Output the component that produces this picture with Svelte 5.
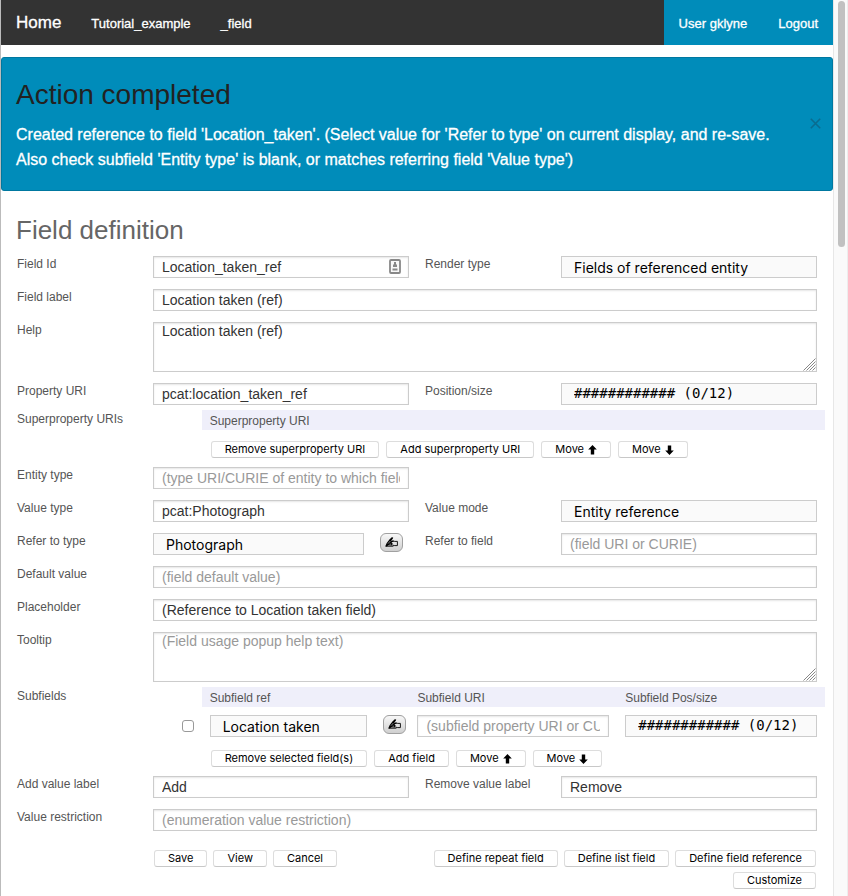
<script>
  let values = $state({
    id: 'Location_taken_ref',
    label: 'Location taken (ref)',
    help: 'Location taken (ref)',
    property: 'pcat:location_taken_ref',
    entity: '',
    valueType: 'pcat:Photograph',
    refField: '',
    fallback: '',
    placeholder: '(Reference to Location taken field)',
    tooltip: '',
    subUri: '',
    add: 'Add',
    remove: 'Remove',
    restriction: ''
  });
  let showAlert = $state(true);
  let picked = $state(false);
</script>

{#snippet text(id, label, key, hint = '', wide = false)}
  <label for={id}>{label}</label>
  <div class="cell" class:wide>
    <input {id} class="box" type="text" placeholder={hint} bind:value={values[key]} />
  </div>
{/snippet}

{#snippet area(id, label, key, hint = '')}
  <label for={id}>{label}</label>
  <div class="cell wide area">
    <textarea {id} class="box" placeholder={hint} bind:value={values[key]}></textarea>
    <svg class="grip" width="13" height="13" viewBox="0 0 13 13" aria-hidden="true">
      <path d="M0.5 12.5L12.5 0.5M3.5 12.5L12.5 3.5M6.5 12.5L12.5 6.5M9.5 12.5L12.5 9.5" />
    </svg>
  </div>
{/snippet}

{#snippet choice(id, label, option, mono = false)}
  <label for={id}>{label}</label>
  <div class="cell">
    <select {id} class="box" class:mono><option>{option}</option></select>
  </div>
{/snippet}

{#snippet editButton(name)}
  <button type="button" class="edit" aria-label={name}>
    <svg width="13" height="10" viewBox="0 0 13 10" aria-hidden="true">
      <path d="M0.2 9.4L1.6 6.2 4.4 2.6 6.8 0.2 8.2 0.4 7.8 1.8 6 3.8 8.4 3.6 8.8 4.6 6.4 5.6 7.6 6.2 7.2 8.4 3.6 8.2 1.6 9.4Z" />
      <path class="line" d="M7.6 3.9L9.8 4.4H12.4V8.6H9.8L7.6 8.2M0.8 9.2H8.4" />
      <path class="cut" d="M3 6.6L5.4 4M4.4 7.2H6.2" />
    </svg>
  </button>
{/snippet}

{#snippet arrow(down = false)}
  <svg class="arrow" class:down width="9" height="10" viewBox="0 0 9 10" aria-hidden="true">
    <path d="M4.5 0L8.8 4.6H6.2V9.4H2.8V4.6H0.2Z" />
  </svg>
{/snippet}

<div class="page">
  <div class="content">
    <nav>
      <a class="home" href="#home">Home</a>
      <a href="#collection">Tutorial_example</a>
      <a href="#field">_field</a>
      <div class="account">
        <a href="#user">User gklyne</a>
        <a href="#logout">Logout</a>
      </div>
    </nav>

    {#if showAlert}
      <section class="alert" role="status">
        <div>
          <h3>Action completed</h3>
          <p>Created reference to field 'Location_taken'. (Select value for 'Refer to type' on current display, and re-save. Also check subfield 'Entity type' is blank, or matches referring field 'Value type')</p>
        </div>
        <button type="button" class="close" aria-label="Close" onclick={() => (showAlert = false)}>
          <svg width="11" height="11" viewBox="0 0 11 11" aria-hidden="true"><path d="M0.8 0.8L10.2 10.2M10.2 0.8L0.8 10.2" /></svg>
        </button>
      </section>
    {/if}

    <form onsubmit={(e) => e.preventDefault()}>
      <h2>Field definition</h2>

      <div class="row">
        <label for="field-id">Field Id</label>
        <div class="cell">
          <input id="field-id" class="box" type="text" bind:value={values.id} />
          <svg class="autofill" width="12" height="15" viewBox="0 0 12 15" aria-hidden="true">
            <rect x="1" y="1" width="10" height="13" rx="1" />
            <path d="M5 3H7V5.5H8V8H4V5.5H5ZM3.5 9.5H8.5V11.5H3.5Z" />
          </svg>
        </div>
        {@render choice('render-type', 'Render type', 'Fields of referenced entity')}
      </div>
      <div class="row">{@render text('field-label', 'Field label', 'label', '', true)}</div>
      <div class="row">{@render area('help', 'Help', 'help')}</div>
      <div class="row">
        {@render text('property', 'Property URI', 'property')}
        {@render choice('position', 'Position/size', '############ (0/12)', true)}
      </div>

      <div class="row group">
        <span class="caption">Superproperty URIs</span>
        <div class="wide">
          <table>
            <colgroup><col class="tick" /><col /></colgroup>
            <thead><tr><td></td><th>Superproperty URI</th></tr></thead>
          </table>
          <div class="tools first">
            <button type="button">Remove superproperty URI</button>
            <button type="button">Add superproperty URI</button>
            <button type="button">Move {@render arrow()}</button>
            <button type="button">Move {@render arrow(true)}</button>
          </div>
        </div>
      </div>

      <div class="row">{@render text('entity', 'Entity type', 'entity', '(type URI/CURIE of entity to which field applies)')}</div>
      <div class="row">
        {@render text('value-type', 'Value type', 'valueType')}
        {@render choice('value-mode', 'Value mode', 'Entity reference')}
      </div>
      <div class="row">
        <label for="refer-type">Refer to type</label>
        <div class="pair">
          <select id="refer-type" class="box"><option>Photograph</option></select>
          {@render editButton('Edit type')}
        </div>
        {@render text('refer-field', 'Refer to field', 'refField', '(field URI or CURIE)')}
      </div>
      <div class="row">{@render text('default', 'Default value', 'fallback', '(field default value)', true)}</div>
      <div class="row">{@render text('placeholder', 'Placeholder', 'placeholder', '', true)}</div>
      <div class="row">{@render area('tooltip', 'Tooltip', 'tooltip', '(Field usage popup help text)')}</div>

      <div class="row group">
        <span class="caption">Subfields</span>
        <div class="wide">
          <table>
            <colgroup><col class="tick" /><col /><col /><col /></colgroup>
            <thead>
              <tr><td></td><th>Subfield ref</th><th>Subfield URI</th><th>Subfield Pos/size</th></tr>
            </thead>
            <tbody>
              <tr>
                <td class="pick"><input type="checkbox" aria-label="Select subfield" bind:checked={picked} /></td>
                <td>
                  <div class="pair">
                    <select class="box" aria-label="Subfield ref"><option>Location taken</option></select>
                    {@render editButton('Edit subfield')}
                  </div>
                </td>
                <td><div class="cell"><input class="box" type="text" aria-label="Subfield URI" placeholder="(subfield property URI or CURIE)" bind:value={values.subUri} /></div></td>
                <td><div class="cell"><select class="box mono" aria-label="Subfield position and size"><option>############ (0/12)</option></select></div></td>
              </tr>
            </tbody>
          </table>
          <div class="tools">
            <button type="button">Remove selected field(s)</button>
            <button type="button">Add field</button>
            <button type="button">Move {@render arrow()}</button>
            <button type="button">Move {@render arrow(true)}</button>
          </div>
        </div>
      </div>

      <div class="row">
        {@render text('add-label', 'Add value label', 'add')}
        {@render text('remove-label', 'Remove value label', 'remove')}
      </div>
      <div class="row">{@render text('restriction', 'Value restriction', 'restriction', '(enumeration value restriction)', true)}</div>

      <div class="actions">
        <div class="start">
          <button type="submit">Save</button>
          <button type="button">View</button>
          <button type="button">Cancel</button>
        </div>
        <div class="end">
          <button type="button">Define repeat field</button>
          <button type="button">Define list field</button>
          <button type="button">Define field reference</button>
          <button type="button">Customize</button>
        </div>
      </div>
    </form>
  </div>
  <div class="track" aria-hidden="true"><div class="thumb"></div></div>
</div>

<style>
  :global(body) {
    margin: 0;
    background: #fff;
  }
  .page {
    display: flex;
    min-height: 100vh;
    font-family: 'Liberation Sans', Arial, sans-serif;
    font-size: 14px;
    color: #333;
  }
  .page * {
    box-sizing: border-box;
  }
  .content {
    flex: 1;
    min-width: 0;
    border-left: 1px solid #bbb;
  }
  .track {
    width: 15px;
    padding: 1px 2px 0 4px;
    background: #fafafa;
    border-left: 1px solid #e7e7e7;
    border-right: 1px solid #ededed;
  }
  .thumb {
    height: 246px;
    border-radius: 4px;
    background: #c1c1c1;
  }

  nav {
    display: flex;
    height: 45px;
    background: #333;
  }
  nav a {
    padding: 0 15px;
    line-height: 47px;
    font-size: 13px;
    color: #fff;
    text-decoration: none;
    -webkit-text-stroke: 0.3px #fff;
  }
  nav .home {
    line-height: 45px;
    font-size: 17px;
  }
  .account {
    display: flex;
    gap: 1px;
    margin-left: auto;
    background: #008cba;
  }

  .alert {
    display: flex;
    align-items: center;
    justify-content: space-between;
    gap: 24px;
    margin-top: 12px;
    padding: 17px 11px 18px 14px;
    border: 1px solid #0078a0;
    border-radius: 3px;
    background: #008cba;
  }
  .alert h3 {
    margin: 0 0 8px;
    font-size: 28px;
    line-height: 39px;
    font-weight: 400;
    color: #222;
  }
  .alert p {
    margin: 0;
    font-size: 16px;
    line-height: 25px;
    color: #fff;
    -webkit-text-stroke: 0.3px #fff;
  }
  .close {
    display: flex;
    padding: 0;
    border: 0;
    background: none;
  }
  .close path {
    fill: none;
    stroke: #0a6c8f;
    stroke-width: 1.6;
  }

  form {
    padding: 20px 8px 7px;
  }
  h2 {
    margin: 0 7px 7px;
    font-size: 26px;
    line-height: 38px;
    font-weight: 400;
    color: #666;
  }
  .row {
    display: grid;
    grid-template-columns: 1fr 2fr 1fr 2fr;
    margin-bottom: 11px;
  }
  label,
  .caption {
    padding-left: 8px;
    font-size: 12px;
    line-height: 17px;
    color: #555;
  }
  .cell {
    position: relative;
    padding: 0 8px;
    min-width: 0;
  }
  .wide {
    grid-column: 2 / -1;
  }
  .box {
    display: block;
    width: 100%;
    height: 22px;
    margin: 0;
    padding: 0 8px;
    border: 1px solid #ccc;
    border-radius: 0;
    background: #fff;
    box-shadow: inset 0 1px 2px rgba(0, 0, 0, 0.1);
    font-family: inherit;
    font-size: 14px;
    color: #333;
    outline: none;
  }
  .box::placeholder {
    color: #999;
    opacity: 1;
  }
  select.box {
    appearance: none;
    padding: 0 12px;
    background: #fafafa;
    box-shadow: none;
    font-family: Inter, sans-serif;
    color: #000;
  }
  select.mono {
    padding-bottom: 2px;
    font-family: 'DejaVu Sans Mono', monospace;
  }
  textarea.box {
    height: 50px;
    padding: 0 8px;
    line-height: 17px;
    resize: none;
  }
  .grip {
    position: absolute;
    right: 9px;
    bottom: 1px;
    fill: none;
    stroke: #888;
  }
  .autofill {
    position: absolute;
    right: 16px;
    top: 3px;
    fill: #888;
  }
  .autofill rect {
    fill: #f8f8f8;
    stroke: #888;
    stroke-width: 1.8;
  }

  .pair {
    display: grid;
    grid-template-columns: 5fr 1fr;
    min-width: 0;
  }
  .pair select {
    justify-self: center;
    width: calc(100% - 16px);
  }
  .edit {
    display: flex;
    align-items: center;
    justify-content: center;
    width: 23px;
    height: 19px;
    margin-left: 8px;
    padding: 0 0 2px;
    border: 1px solid #a0a0a0;
    border-radius: 6px;
    background: linear-gradient(#f8f8f8, #cfcfcf);
  }
  .edit .line {
    fill: none;
    stroke: #000;
    stroke-width: 0.9;
  }
  .edit .cut {
    fill: none;
    stroke: #ddd;
    stroke-width: 0.6;
  }

  .group {
    margin: -6px 0 9px;
  }
  .caption {
    padding-top: 1px;
  }
  table {
    width: 100%;
    table-layout: fixed;
    border-collapse: collapse;
  }
  .tick {
    width: 8.3333%;
  }
  thead td,
  th {
    height: 20px;
    padding: 0;
  }
  th {
    padding: 3px 8px 0;
    background: #efeffa;
    font-size: 12px;
    line-height: 17px;
    font-weight: 400;
    text-align: left;
    color: #555;
  }
  tbody td {
    padding: 8px 0 0;
    vertical-align: top;
  }
  .pick {
    text-align: right;
  }
  .pick input {
    appearance: none;
    display: block;
    width: 12px;
    height: 12px;
    margin: 5px 8px 0 auto;
    border: 1px solid #999;
    border-radius: 3px;
    background: #fff;
  }
  .pick input:checked {
    background: #008cba;
  }
  .tools {
    display: flex;
    flex-wrap: wrap;
    gap: 7px;
    margin-top: 13px;
    padding-left: calc(8.3333% + 9px);
  }
  .tools.first {
    margin-top: 11px;
  }
  .tools button,
  .actions button {
    display: flex;
    align-items: center;
    gap: 4px;
    height: 17px;
    padding: 0 13px;
    border: 1px solid #ddd;
    border-bottom-color: #c8c8c8;
    border-radius: 3px;
    background: #fff;
    font-family: Inter, sans-serif;
    font-size: 11px;
    line-height: 15px;
    color: #000;
    white-space: nowrap;
  }
  .down {
    transform: rotate(180deg);
  }
  .actions {
    display: grid;
    grid-template-columns: 1fr 2fr 3fr;
    padding-top: 8px;
  }
  .start,
  .end {
    display: flex;
    flex-wrap: wrap;
    align-content: start;
    gap: 5px 6px;
    padding: 0 9px;
  }
  .start {
    grid-column: 2;
  }
  .end {
    justify-content: flex-end;
    padding-left: 0;
  }
</style>
